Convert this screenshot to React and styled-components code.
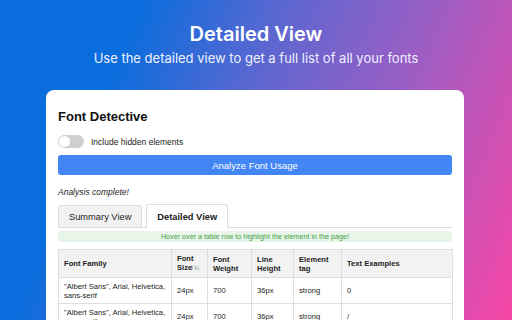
import React from 'react';
import styled, { createGlobalStyle } from 'styled-components';

const GlobalStyle = createGlobalStyle`
	html, body {
		margin: 0;
		padding: 0;
	}
	body {
		width: 512px;
		height: 320px;
		overflow: hidden;
	}
`;

const StyledPage = styled.div`
	width: 512px;
	height: 320px;
	overflow: hidden;
	box-sizing: border-box;
	padding-top: 22px;
	background: linear-gradient(112deg, #0a6ddd 22%, #5d67d0 45%, #9a5ec4 68%, #f746a6 100%);
	font-family: "Liberation Sans", Arial, sans-serif;
`;

const StyledTitle = styled.h1`
	margin: 0;
	text-align: center;
	color: #ffffff;
	font-family: Inter, "Noto Sans", sans-serif;
	font-weight: 600;
	font-size: 20px;
	line-height: 24px;
`;

const StyledSubtitle = styled.p`
	margin: 4px 0 0;
	text-align: center;
	color: #eef0ff;
	font-family: Inter, "Noto Sans", sans-serif;
	font-size: 13px;
	line-height: 16px;
`;

const StyledCard = styled.div`
	margin: 24px 0 0 46px;
	width: 418px;
	height: 260px;
	box-sizing: border-box;
	background: #ffffff;
	border-radius: 8px;
	padding: 19px 12px 0;
`;

const StyledHeading = styled.h2`
	margin: 0;
	font-size: 13px;
	line-height: 16px;
	font-weight: 700;
	color: #111;
`;

const StyledToggleRow = styled.label`
	display: flex;
	align-items: center;
	gap: 7px;
	margin-top: 10px;
	font-size: 8.5px;
	color: #222;
`;

const StyledSwitch = styled.span`
	position: relative;
	width: 26px;
	height: 13px;
	border-radius: 7px;
	background: #cfcfcf;

	&::after {
		content: '';
		position: absolute;
		left: 1px;
		top: 1px;
		width: 11px;
		height: 11px;
		border-radius: 50%;
		background: #ffffff;
	}
`;

const StyledButton = styled.button`
	display: block;
	width: 100%;
	height: 20px;
	margin-top: 7px;
	border: none;
	border-radius: 3px;
	background: #4285f4;
	color: #ffffff;
	font-family: inherit;
	font-size: 9.5px;
	padding: 0;
`;

const StyledStatus = styled.p`
	margin: 12px 0 0;
	font-size: 8.5px;
	line-height: 10px;
	font-style: italic;
	color: #222;
`;

const StyledTabBar = styled.div`
	display: flex;
	gap: 4px;
	margin-top: 7px;
	border-bottom: 1px solid #dddddd;
`;

const StyledTab = styled.div`
	height: ${p => p.active ? 24 : 22}px;
	box-sizing: border-box;
	padding: 0 10px;
	display: flex;
	align-items: center;
	font-size: 9.3px;
	font-weight: ${p => p.active ? 700 : 400};
	color: #222;
	background: ${p => p.active ? '#ffffff' : '#f1f1f1'};
	border: 1px solid #dddddd;
	border-bottom: none;
	border-radius: 3px 3px 0 0;
	margin-bottom: ${p => p.active ? -1 : 0}px;
	align-self: flex-end;
`;

const StyledHint = styled.div`
	margin-top: 3px;
	height: 11px;
	line-height: 11px;
	border-radius: 2px;
	background: #e8f5e9;
	color: #43a047;
	font-size: 7.2px;
	text-align: center;
`;

const StyledTable = styled.table`
	margin-top: 7px;
	width: 394px;
	border-collapse: collapse;
	table-layout: fixed;
	font-size: 7.6px;
	color: #222;

	th, td {
		border: 1px solid #dddddd;
		padding: 0 4px 0 5px;
		text-align: left;
		vertical-align: middle;
		line-height: 9px;
	}

	th {
		height: 27px;
		background: #f2f2f2;
		font-weight: 700;
	}

	td {
		height: 25px;
	}
`;

const StyledSort = styled.span`
	font-size: 6px;
	font-weight: 400;
	color: #777;
	margin-left: -3px;
`;

const columns = [113, 36, 44, 42, 48, 111];

const rows = [
	{ family: '"Albert Sans", Arial, Helvetica, sans-serif', size: '24px', weight: '700', line: '36px', tag: 'strong', text: '0' },
	{ family: '"Albert Sans", Arial, Helvetica, sans-serif', size: '24px', weight: '700', line: '36px', tag: 'strong', text: '/' },
];

export default function App() {
	return (
		<StyledPage>
			<GlobalStyle />
			<StyledTitle>Detailed View</StyledTitle>
			<StyledSubtitle>Use the detailed view to get a full list of all your fonts</StyledSubtitle>

			<StyledCard>
				<StyledHeading>Font Detective</StyledHeading>
				<StyledToggleRow>
					<StyledSwitch />
					Include hidden elements
				</StyledToggleRow>
				<StyledButton type="button">Analyze Font Usage</StyledButton>
				<StyledStatus>Analysis complete!</StyledStatus>

				<StyledTabBar>
					<StyledTab>Summary View</StyledTab>
					<StyledTab active>Detailed View</StyledTab>
				</StyledTabBar>

				<StyledHint>Hover over a table row to highlight the element in the page!</StyledHint>

				<StyledTable>
					<colgroup>
						{columns.map((w, i) => <col key={i} style={{ width: w }} />)}
					</colgroup>
					<thead>
						<tr>
							<th>Font Family</th>
							<th>Font Size<StyledSort>⇕¼</StyledSort></th>
							<th>Font Weight</th>
							<th>Line Height</th>
							<th>Element tag</th>
							<th>Text Examples</th>
						</tr>
					</thead>
					<tbody>
						{rows.map((r, i) => (
							<tr key={i}>
								<td>{r.family}</td>
								<td>{r.size}</td>
								<td>{r.weight}</td>
								<td>{r.line}</td>
								<td>{r.tag}</td>
								<td>{r.text}</td>
							</tr>
						))}
					</tbody>
				</StyledTable>
			</StyledCard>
		</StyledPage>
	);
}
